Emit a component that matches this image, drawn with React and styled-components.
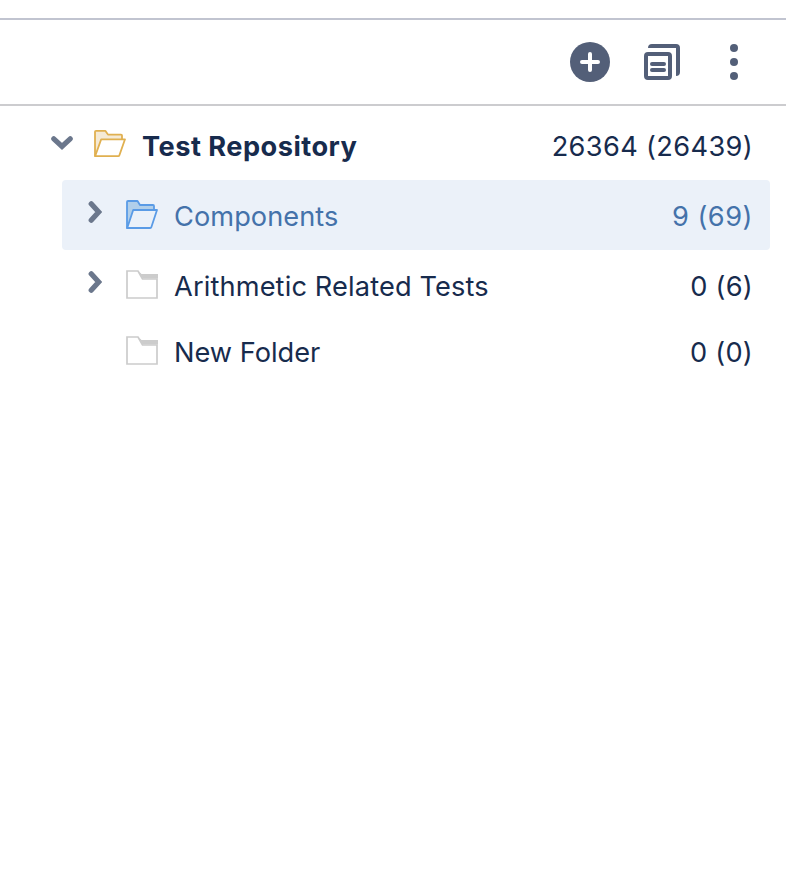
import React, { useState } from 'react'
import styled, { createGlobalStyle } from 'styled-components'

const GlobalStyle = createGlobalStyle`
body{
    margin:0;
    background-color:#fff;
    font-family:Inter, "Liberation Sans", sans-serif;
}
`
const StyledPanel = styled.div`
box-sizing:border-box;
height:100vh;
padding-top:18px;
overflow:hidden;
`
const Toolbar = styled.div`
display:flex;
align-items:center;
justify-content:flex-end;
gap:34px;
height:84px;
padding-right:32px;
border-top:2px solid #c1c4d0;
border-bottom:2px solid #cccccf;
`
const ToolButton = styled.button`
display:flex;
padding:0;
border:0;
background:none;
color:#535f78;
cursor:pointer;
`
const Tree = styled.div`
padding:4px 16px 0 0;
`
const Row = styled.div`
box-sizing:border-box;
display:flex;
align-items:center;
height:${props => props.$height}px;
margin-left:${props => props.$indent}px;
padding:0 17px 0 ${props => props.$inset}px;
border-radius:4px;
color:${props => props.$selected ? '#4472aa' : '#172b4d'};
background-color:${props => props.$selected ? '#ebf1f9' : 'transparent'};
cursor:pointer;
svg{
    flex:none;
}
`
const Toggle = styled.span`
display:flex;
width:${props => props.$width}px;
margin-bottom:${props => props.$lift}px;
color:#6b778c;
`
const FolderIcon = styled.span`
display:flex;
width:32px;
margin-bottom:${props => props.$lift}px;
`
const Label = styled.span`
margin-left:16px;
padding-top:4px;
font-size:27.2px;
line-height:34px;
font-weight:${props => props.$bold ? 700 : 400};
letter-spacing:${props => props.$spacing}px;
white-space:nowrap;
`
const Count = styled(Label)`
margin-left:auto;
`

const PlusIcon = () => (
    <svg width="40" height="40" viewBox="0 0 40 40">
        <circle cx="20" cy="20" r="20" fill="currentColor" />
        <path d="M20 12v16M12 20h16" stroke="#fff" strokeWidth="4" strokeLinecap="round" />
    </svg>
)

const CopyIcon = () => (
    <svg width="36" height="36" viewBox="0 0 36 36" fill="none" stroke="currentColor" strokeWidth="4">
        <path d="M4 4a4 4 0 0 1 4-4h24a4 4 0 0 1 4 4v24a4 4 0 0 1-4 4V4z" fill="currentColor" stroke="none" />
        <rect x="2" y="10" width="24" height="24" rx="2" />
        <path d="M8 20h12M8 26h12" strokeLinecap="round" />
    </svg>
)

const MoreIcon = () => (
    <svg width="40" height="40" viewBox="0 0 40 40" fill="currentColor">
        <circle cx="20" cy="6" r="4" />
        <circle cx="20" cy="20" r="4" />
        <circle cx="20" cy="34" r="4" />
    </svg>
)

const ChevronDown = () => (
    <svg width="22" height="14" viewBox="0 0 22 14" fill="none" stroke="currentColor" strokeWidth="5.2" strokeLinecap="round">
        <path d="M2.8 2.8L11 10.4 19.2 2.8" />
    </svg>
)

const ChevronRight = () => (
    <svg width="14" height="22" viewBox="0 0 14 22" fill="none" stroke="currentColor" strokeWidth="5.2" strokeLinecap="round">
        <path d="M3.2 2.8L10.7 11 3.2 19.2" />
    </svg>
)

const OpenFolder = ({ stroke, fill, front, height }) => (
    <svg width="32" height={height} viewBox="0 0 32 29" preserveAspectRatio="none" stroke={stroke} strokeWidth="1.8" strokeLinejoin="round">
        <path d="M1 28V2q0-1 1-1h9.5L14 5h13q1 0 1 1v4L22 28z" fill={fill} />
        <path d="M7.2 10H31l-5.6 17q-.3 1-1.2 1H1.2z" fill={front} />
    </svg>
)

const ClosedFolder = () => (
    <svg width="32" height="29" viewBox="0 0 32 29">
        <path d="M1 1h11l4.5 8H31v19H1z" fill="#fff" stroke="#ccc" strokeWidth="1.7" />
        <path d="M12.5 1l4 7.5H32V4H15.5z" fill="#ccc" />
    </svg>
)

const folders = [
    { id: 1, name: 'Components', count: '9 (69)', height: 70, hasChildren: true, spacing: 0.05, countSpacing: 0.5 },
    { id: 2, name: 'Arithmetic Related Tests', count: '0 (6)', height: 70, hasChildren: true, spacing: 0.14, countSpacing: 0.25 },
    { id: 3, name: 'New Folder', count: '0 (0)', height: 62, hasChildren: false, spacing: 0, countSpacing: 0.25 },
]

export default function App() {
    const [selected, setSelected] = useState(1)

    const folderList = folders.map((folder) => {
        const isSelected = folder.id === selected
        return (
            <Row key={folder.id} $height={folder.height} $indent={62} $inset={26} $selected={isSelected} onClick={() => setSelected(folder.id)}>
                <Toggle $width={38} $lift={6}>{folder.hasChildren ? <ChevronRight /> : null}</Toggle>
                <FolderIcon $lift={2}>
                    {isSelected ? <OpenFolder stroke="#5a9be6" fill="#b1cfea" front="#ebf1f9" height={29} /> : <ClosedFolder />}
                </FolderIcon>
                <Label $spacing={folder.spacing}>{folder.name}</Label>
                <Count $spacing={folder.countSpacing}>{folder.count}</Count>
            </Row>
        )
    })

    return (
        <StyledPanel>
            <GlobalStyle />
            <Toolbar>
                <ToolButton title="New Folder"><PlusIcon /></ToolButton>
                <ToolButton title="Copy"><CopyIcon /></ToolButton>
                <ToolButton title="More"><MoreIcon /></ToolButton>
            </Toolbar>
            <Tree>
                <Row $height={70} $indent={0} $inset={51}>
                    <Toggle $width={43} $lift={4}><ChevronDown /></Toggle>
                    <FolderIcon $lift={4}><OpenFolder stroke="#e0b050" fill="#f5ead5" front="#fff" height={27} /></FolderIcon>
                    <Label $bold $spacing={0.48}>Test Repository</Label>
                    <Count $spacing={0.35}>26364 (26439)</Count>
                </Row>
                {folderList}
            </Tree>
        </StyledPanel>
    )
}
